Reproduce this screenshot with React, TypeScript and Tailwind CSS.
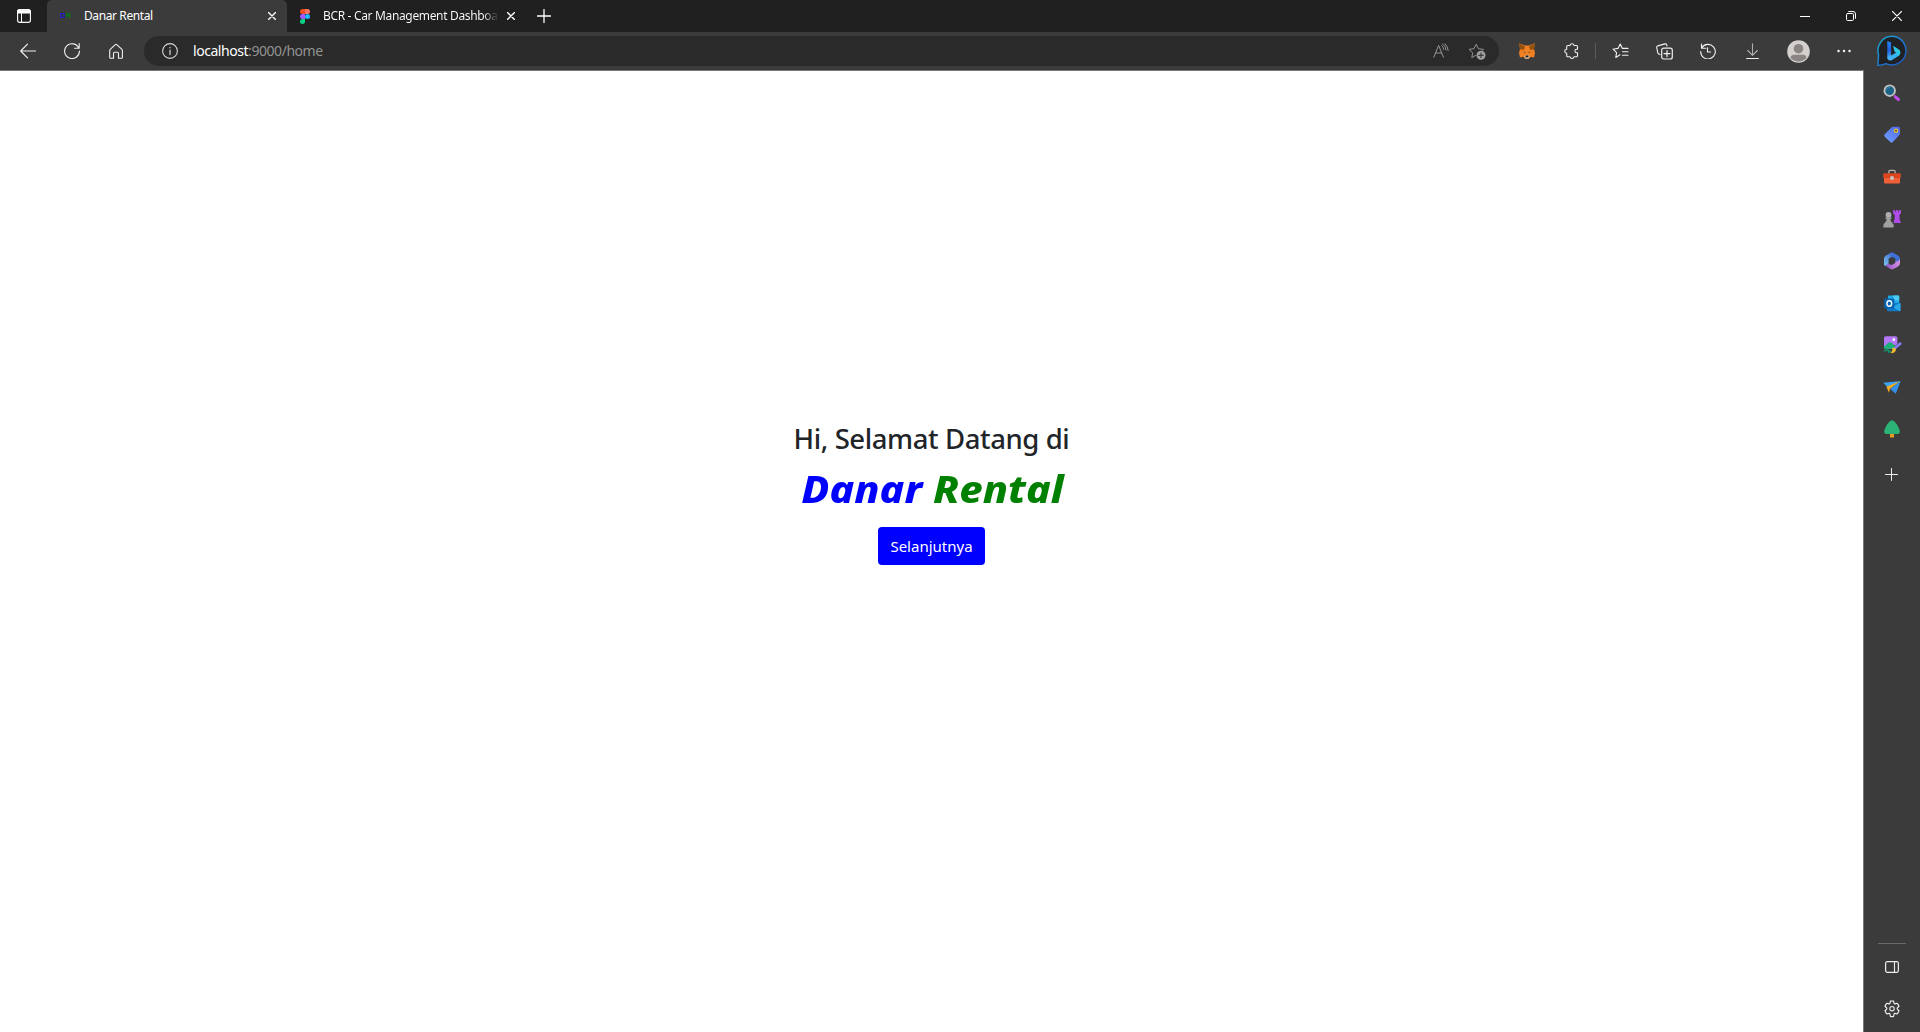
import type { ReactNode } from 'react';

type IconProps = { w?: number; h?: number; children: ReactNode };

function Icon({ w = 16, h = 16, children }: IconProps) {
  return (
    <svg
      width={w}
      height={h}
      viewBox={`0 0 ${w} ${h}`}
      fill="none"
      stroke="currentColor"
      strokeWidth="1"
      strokeLinecap="round"
      strokeLinejoin="round"
      className="block shrink-0"
    >
      {children}
    </svg>
  );
}

function CloseIcon() {
  return (
    <Icon w={8} h={8}>
      <path d="M.5 .5L7.5 7.5M7.5 .5L.5 7.5" strokeWidth="1.4" />
    </Icon>
  );
}

function TitleBar() {
  return (
    <div className="flex h-8 shrink-0 bg-[#202020] text-[12px] text-white">
      <div className="flex w-[47px] items-center justify-center pl-[1px]">
        <Icon w={14} h={14}>
          <rect x=".6" y=".6" width="12.8" height="12.8" rx="2.2" strokeWidth="1.1" />
          <path d="M1 1.2H13V4H1Z" fill="currentColor" />
          <path d="M4.5 4V13.4" />
        </Icon>
      </div>
      <div className="flex w-60 items-center rounded-t-[5px] bg-[#3b3b3b] pr-[11px] pl-[13px]">
        <span className="flex w-6 font-['Liberation_Sans',sans-serif] text-[8px] leading-none font-bold tracking-[-0.6px]">
          <span className="text-[#1717d8]">D</span>
          <span className="text-[#087b12]">R</span>
        </span>
        <span className="flex-1 whitespace-nowrap tracking-[-0.4px]">Danar Rental</span>
        <CloseIcon />
      </div>
      <div className="flex w-[239px] shrink-0 items-center pl-[13px]">
        <svg width="10" height="15" viewBox="0 0 10 15" className="mr-[13px] block shrink-0">
          <path d="M5 0H2.5A2.5 2.5 0 0 0 2.5 5H5Z" fill="#f24e1e" />
          <path d="M5 0H7.5A2.5 2.5 0 0 1 7.5 5H5Z" fill="#ff7262" />
          <path d="M5 5H2.5A2.5 2.5 0 0 0 2.5 10H5Z" fill="#a259ff" />
          <circle cx="7.5" cy="7.5" r="2.5" fill="#1abcfe" />
          <path d="M5 10H2.5A2.5 2.5 0 1 0 5 12.5Z" fill="#0acf83" />
        </svg>
        <span className="w-[174px] bg-linear-to-r from-white from-92% to-[#333] bg-clip-text whitespace-nowrap text-transparent tracking-[-0.34px]">
          BCR - Car Management Dashboa
        </span>
        <span className="ml-[10px]">
          <CloseIcon />
        </span>
        <span className="ml-[11px] h-5 w-px bg-[#696969]" />
      </div>
      <div className="flex w-9 items-center justify-center">
        <Icon w={14} h={14}>
          <path d="M7 .5V13.5M.5 7H13.5" strokeWidth="1.3" />
        </Icon>
      </div>
      <div className="ml-auto flex">
        <div className="flex w-[46px] items-center justify-center">
          <span className="h-px w-[10px] bg-white" />
        </div>
        <div className="flex w-[46px] items-center justify-center">
          <Icon w={10} h={10}>
            <rect x=".5" y="2.5" width="7" height="7" rx="1.2" />
            <path d="M2.7 .5H7A2.5 2.5 0 0 1 9.5 3V7.3" />
          </Icon>
        </div>
        <div className="flex w-[46px] items-center justify-center">
          <Icon w={10} h={10}>
            <path d="M.4 .4L9.6 9.6M9.6 .4L.4 9.6" strokeWidth="1.2" />
          </Icon>
        </div>
      </div>
    </div>
  );
}

function Tool({ children }: { children: ReactNode }) {
  return <div className="flex w-11 shrink-0 items-center justify-center">{children}</div>;
}

function MetaMask() {
  return (
    <svg width="16" height="16" viewBox="0 0 16 16" className="block">
      <path d="M.3 .3L6 2.6H10L15.7 .3L15 6L16 10L15 14.6L11.8 13.7L9.8 15.8H6.2L4.2 13.7L1 14.6L0 10L1 6Z" fill="#f08022" />
      <path d="M.3 .3L6 3.6L5 6.8L1 6.4ZM15.7 .3L10 3.6L11 6.8L15 6.4Z" fill="#94500f" />
      <path d="M3.9 8.8L6.3 9L6.6 10ZM12.1 8.8L9.7 9L9.4 10Z" fill="#35404e" />
      <path d="M5.2 13.2L6.6 12.2H9.4L10.8 13.2L9.6 15.8H6.4Z" fill="#c9b5a4" />
      <path d="M6.8 12.6H9.2L9.5 14.2H6.5Z" fill="#1b1b1b" />
    </svg>
  );
}

function Bing() {
  return (
    <svg width="32" height="32" viewBox="0 0 32 32" className="block">
      <defs>
        <linearGradient id="ring" x1="0" y1="0" x2="1" y2="1">
          <stop offset="0" stopColor="#19b6dd" />
          <stop offset=".45" stopColor="#1d82d8" />
          <stop offset="1" stopColor="#1852c4" />
        </linearGradient>
        <linearGradient id="stem" x1="0" y1="0" x2="0" y2="1">
          <stop offset="0" stopColor="#2487f5" />
          <stop offset=".55" stopColor="#245ddd" />
          <stop offset="1" stopColor="#43bdf7" />
        </linearGradient>
        <linearGradient id="bowl" x1="1" y1="0" x2="0" y2="1">
          <stop offset="0" stopColor="#2be0d0" />
          <stop offset=".5" stopColor="#32b4ef" />
          <stop offset="1" stopColor="#4daefc" />
        </linearGradient>
      </defs>
      <path d="M16.5 1.3A14.3 14.3 0 1 1 10 28.7C7.5 30 4.5 30.4 1.9 30.4L2.6 20A14.3 14.3 0 0 1 16.5 1.3Z" fill="#202124" stroke="url(#ring)" strokeWidth="1.4" />
      <path d="M11.3 6L15.1 7.4V20.8L11.3 23.4Z" fill="url(#stem)" />
      <path d="M17.1 10.8L22.5 14.2C25.1 16 24.9 19.5 22.5 21L15.7 25.2C13.5 26.2 11.3 25 11.3 22.6L20 17.8L18.5 16.6Z" fill="url(#bowl)" />
    </svg>
  );
}

function Toolbar() {
  return (
    <div className="flex h-[38px] shrink-0 items-center bg-[#3b3b3b] pl-[6px] text-[#f0f0f0]">
      <Tool>
        <Icon>
          <path d="M15.8 8H.7M7.5 1.2L.7 8L7.5 14.8" strokeWidth="1.15" />
        </Icon>
      </Tool>
      <Tool>
        <Icon>
          <path d="M14.8 5.2A7.4 7.4 0 1 0 15.4 8M15.2 .6V5.2H10.6" strokeWidth="1.1" />
        </Icon>
      </Tool>
      <Tool>
        <Icon w={14} h={16}>
          <path d="M1 7.2Q1 6.7 1.5 6.2L6.3 1.6Q7 1 7.7 1.6L12.7 6.2Q13.4 6.9 13.4 7.6V14.5Q13.4 15.3 12.5 15.3H9.5V10.5Q9.5 9.3 8.5 9.3H5.5Q4.5 9.3 4.5 10.5V15.3H1.6Q.7 15.3 .7 14.5V7.6Q.7 6.9 1.5 6.2" strokeWidth="1.1" />
        </Icon>
      </Tool>
      <div className="ml-[6px] flex h-[30px] w-[1355px] shrink-0 items-center rounded-full bg-[#2a2a2a] pl-[18px]">
        <Icon>
          <circle cx="8" cy="8" r="7.4" stroke="#d8d8d8" strokeWidth="1.1" />
          <path d="M8 7.2V11.5M8 4.5V4.8" stroke="#b8b8b8" strokeWidth="1.5" />
        </Icon>
        <span className="ml-[15px] flex-1 text-[14px] leading-5 tracking-[-0.45px] text-[#929292]">
          <span className="text-white">localhost</span>:9000/home
        </span>
        <div className="flex w-9 justify-center text-[#949494]">
          <Icon>
            <path d="M.8 14.2L5.6 2.3L10.4 14.2M2.5 10H8.7M8.8 2.8A5 5 0 0 1 10.7 6.4M9.6 .9A8 8 0 0 1 13 7M12 .8A10 10 0 0 1 15.2 7.5" />
          </Icon>
        </div>
        <div className="mr-[4px] flex w-9 justify-center text-[#949494]">
          <Icon w={18} h={17}>
            <path d="M7.6 12.4L3.8 14.7L4.7 9.8L1 6.4L6 5.7L8.2 1.2L10.4 5.7L15.5 6.4L14.8 7.2" />
            <circle cx="13" cy="12.3" r="4.5" fill="#a0a0a0" stroke="none" />
            <path d="M13 10V14.6M10.7 12.3H15.3" stroke="#2a2a2a" />
          </Icon>
        </div>
      </div>
      <div className="ml-[6px] flex items-center">
        <Tool>
          <MetaMask />
        </Tool>
        <Tool>
          <Icon w={15} h={16}>
            <path d="M2.7 4.5V3.5Q2.7 2.5 3.7 2.5H6Q6.3 .7 8 .7T10 2.5H12.5Q13.5 2.5 13.5 3.5V6.2H12.6Q10.9 6.2 10.9 8T12.6 9.8H13.5V12.8Q13.5 13.8 12.5 13.8H10Q9.6 15.4 8 15.4T6 13.8H3.7Q2.7 13.8 2.7 12.8V10.2Q.7 10 .7 8.2T2.7 6.2Z" strokeWidth="1.1" />
          </Icon>
        </Tool>
        <span className="mx-[2px] h-4 w-px bg-[#5b5b5b]" />
        <Tool>
          <Icon w={17} h={16}>
            <path d="M8 11.8L3.8 14.5L4.6 9.7L1 6.2L6 5.4L8.2 1L10.4 5.4H16M10.5 8.8H16M10.5 12.2H16" strokeWidth="1.1" />
          </Icon>
        </Tool>
        <Tool>
          <Icon w={17} h={17}>
            <path d="M4 11.6L2.8 11Q2 10.6 1.8 9.8L.7 4.6Q.5 3.2 1.8 2.9L8.8 .9Q10.2 .6 10.7 1.9L11 3" strokeWidth="1.1" />
            <rect x="5.7" y="5.2" width="10.6" height="10.8" rx="2" strokeWidth="1.2" />
            <path d="M11 7.6V13.6M8 10.6H14" strokeWidth="1.2" />
          </Icon>
        </Tool>
        <Tool>
          <Icon>
            <path d="M1.5 1V5.2H5.8M1.7 5A7.3 7.3 0 1 1 .7 8.5M7.5 4.8V9H10.6" strokeWidth="1.1" />
          </Icon>
        </Tool>
        <Tool>
          <Icon w={13} h={16}>
            <path d="M6.5 .7V12M1.7 7.5L6.5 12.3L11.3 7.5" stroke="#b0b0b0" strokeWidth="1.1" />
            <path d="M.6 15.5H12.4" />
          </Icon>
        </Tool>
        <div className="flex w-12 items-center justify-center">
          <svg width="23" height="23" viewBox="0 0 23 23" className="block">
            <circle cx="11.5" cy="11.5" r="11.3" fill="#d3d0ce" />
            <circle cx="11.5" cy="8.7" r="4.8" fill="#8a8583" />
            <path d="M3.5 18Q4 14.8 7 14.8H16Q19 14.8 19.5 18A11 11 0 0 1 3.5 18Z" fill="#8a8583" />
          </svg>
        </div>
        <Tool>
          <Icon w={14} h={4}>
            <path d="M1.5 2H1.6M7 2H7.1M12.5 2H12.6" strokeWidth="2.4" />
          </Icon>
        </Tool>
        <div className="flex w-[52px] justify-center">
          <Bing />
        </div>
      </div>
    </div>
  );
}

function SearchGlyph() {
  return (
    <svg width="18" height="18" viewBox="0 0 18 18">
      <path d="M12.2 12.7L15.4 15.5" stroke="#c04cf0" strokeWidth="3" strokeLinecap="round" />
      <circle cx="6.7" cy="6.7" r="5.3" fill="#1b6389" stroke="#c2c0bf" strokeWidth="1.9" />
      <path d="M3.3 6Q4 3.4 7 3.2" stroke="#3e87a8" strokeWidth="1" fill="none" />
    </svg>
  );
}

function TagGlyph() {
  return (
    <svg width="18" height="18" viewBox="0 0 18 18">
      <defs>
        <linearGradient id="tag" x1="1" y1="0" x2="0" y2="1">
          <stop stopColor="#5265e8" />
          <stop offset="1" stopColor="#6ea4ff" />
        </linearGradient>
      </defs>
      <path d="M9 1.1Q9.6 .8 10.4 .8H15.4Q17 .8 17 2.4V7.4Q17 8.4 16.2 9.3L9.8 16.1Q8.6 17.3 7.3 16.1L1.8 10.8Q.5 9.5 1.7 8.3Z" fill="url(#tag)" />
      <circle cx="13" cy="4.8" r="1.6" fill="#414141" stroke="#e9c72c" strokeWidth="1.3" />
    </svg>
  );
}

function ToolboxGlyph() {
  return (
    <svg width="18" height="16" viewBox="0 0 18 16">
      <path d="M5.8 4.5V3Q5.8 1.3 7.3 1.3H10.7Q12.2 1.3 12.2 3V4.5" fill="none" stroke="#b9b3b0" strokeWidth="1.3" />
      <rect x=".2" y="4.3" width="17.6" height="5" rx="1" fill="#d8451f" />
      <path d="M1 9H17V13.5Q17 14.6 16 14.6H2Q1 14.6 1 13.5Z" fill="#f06038" />
      <circle cx="9" cy="9" r="2" fill="#c9c4c2" />
    </svg>
  );
}

function ChessGlyph() {
  return (
    <svg width="18" height="18" viewBox="0 0 18 18">
      <path d="M10.2 0H12V1.4H13.1V0H15V1.4H16.1V0H18V3.4L16.4 4.9L16.7 9.7L18 13H10.4L11.5 9.7L11.8 4.9L10.2 3.4Z" fill="#b04ce8" />
      <circle cx="5.5" cy="5" r="2.9" fill="#b0b0b0" />
      <path d="M2.5 7.5H8.5V8.9H7.3Q7.4 11.6 9.3 13Q10.6 14 10.6 15V17.5H.4V15Q.4 14 1.7 13Q3.6 11.6 3.7 8.9H2.5Z" fill="#a0a0a0" />
    </svg>
  );
}

function OfficeGlyph() {
  return (
    <svg width="18" height="18" viewBox="0 0 18 18">
      <defs>
        <linearGradient id="m1" x1="1" y1="0" x2="0" y2="1">
          <stop stopColor="#355fd0" />
          <stop offset="1" stopColor="#7bc7ed" />
        </linearGradient>
        <linearGradient id="m2" x1="0" y1="0" x2="1" y2="0">
          <stop stopColor="#8a52c8" />
          <stop offset="1" stopColor="#d993e3" />
        </linearGradient>
      </defs>
      <path d="M8.2 .4L3 3.4Q1 4.7 1 7V12.2Q1 14 2.8 14L5.6 12.5V6.8L11.2 3.2Z" fill="url(#m1)" />
      <path d="M7.7 .6Q9.3 .1 10.4 .8L15.3 3.7Q17 4.7 17 7V9.5Q16 11.4 13.8 10.2L12.3 9V6.6L8.4 4.4Q7 3.4 7.7 .6Z" fill="#3c6fd7" />
      <path d="M17 7V11Q17 13.3 15 14.4L10.4 17Q9 17.8 7.5 17L2.8 14Q2.5 12.8 4 12.4L6 12L8.8 12.9L12.4 10.8V9Q15.5 10.5 17 7Z" fill="url(#m2)" />
    </svg>
  );
}

function OutlookGlyph() {
  return (
    <svg width="17" height="17" viewBox="0 0 17 17">
      <path d="M4 1.3Q4 .5 5 .5H14.3Q15.2 .5 15.2 1.5V8H4Z" fill="#21a9e8" />
      <path d="M9.5 .5H14.3Q15.2 .5 15.2 1.5V5.5H9.5Z" fill="#4ccbf4" />
      <path d="M3 8H16.5V15Q16.5 16.3 15.2 16.3H4.3Q3 16.3 3 15Z" fill="#1179c8" />
      <path d="M16.5 8V15Q16.5 16 15.7 16.3L8 11.8Z" fill="#2ba8e7" />
      <rect x=".3" y="3.5" width="10" height="10" rx="1" fill="#0563b2" />
      <ellipse cx="5.3" cy="8.5" rx="2.4" ry="2.7" fill="none" stroke="#fff" strokeWidth="1.4" />
    </svg>
  );
}

function PaintGlyph() {
  return (
    <svg width="19" height="18" viewBox="0 0 19 18">
      <rect x="1" y=".3" width="13.4" height="12.5" rx="1.8" fill="#b276f6" />
      <circle cx="10.8" cy="3.7" r="1.4" fill="#fff" />
      <path d="M1 10.5L5.4 6.7Q7 5.6 8.7 6.8L12.8 10.2V12.8H1Z" fill="#1bb174" />
      <path d="M1 15.4Q4 12.8 6 14.7Q4 16.5 8.5 16" fill="none" stroke="#119568" strokeWidth="1.5" />
      <path d="M12.3 11.7L17.7 7.3" stroke="#3b3b3b" strokeWidth="3.4" />
      <path d="M12.3 11.7L17.3 7.6" stroke="#857ef5" strokeWidth="2.6" strokeLinecap="round" />
      <path d="M9.5 12Q11.8 11 13 13.2Q12.8 17 7.8 17.3Q9.4 15.5 9.5 12Z" fill="#f1b827" />
    </svg>
  );
}

function PlaneGlyph() {
  return (
    <svg width="18" height="15" viewBox="0 0 18 15">
      <path d="M.3 2.7L17.7 1L5 7.8Z" fill="#3da5f4" />
      <path d="M3.4 6.8L17.7 1L7 8.8L6 12.8Z" fill="#f3ad24" />
      <path d="M17.7 1L12.8 13.7L7.2 9Z" fill="#3391ec" />
    </svg>
  );
}

function TreeGlyph() {
  return (
    <svg width="18" height="18" viewBox="0 0 18 18">
      <rect x="7" y="13" width="4" height="4.6" rx=".7" fill="#e69a22" />
      <path d="M9 .3Q10.3 .3 12.2 2.3Q14.8 5 16.4 9.5Q18 14 14 14H4Q0 14 1.6 9.5Q3.2 5 5.8 2.3Q7.7 .3 9 .3Z" fill="#2bb277" />
    </svg>
  );
}

function SideItem({ children }: { children: ReactNode }) {
  return <div className="flex h-[42px] w-full shrink-0 items-center justify-center">{children}</div>;
}

function Sidebar() {
  return (
    <aside className="flex w-[56px] flex-col items-center bg-[#3b3b3b] pt-[2px] text-[#eeeeee]">
      <SideItem><SearchGlyph /></SideItem>
      <SideItem><TagGlyph /></SideItem>
      <SideItem><ToolboxGlyph /></SideItem>
      <SideItem><ChessGlyph /></SideItem>
      <SideItem><OfficeGlyph /></SideItem>
      <SideItem><OutlookGlyph /></SideItem>
      <SideItem><PaintGlyph /></SideItem>
      <SideItem><PlaneGlyph /></SideItem>
      <SideItem><TreeGlyph /></SideItem>
      <div className="flex h-12 items-center justify-center pr-px">
        <Icon w={13} h={13}>
          <path d="M6.5 .5V12.5M.5 6.5H12.5" />
        </Icon>
      </div>
      <span className="mt-auto h-px w-7 bg-[#686868]" />
      <div className="flex h-[46px] items-center justify-center">
        <Icon w={14} h={12}>
          <rect x=".6" y=".6" width="12.8" height="10.8" rx="1.8" strokeWidth="1.2" />
          <path d="M9.5 .6V11.4" strokeWidth="1.1" />
        </Icon>
      </div>
      <div className="mb-1 flex h-[38px] items-center justify-center">
        <Icon w={16} h={18}>
          <path d="M6.4 1.2Q8 .8 9.6 1.2L10.1 3.3Q10.3 4 11 3.9L13 3.3Q14.4 4.5 15 6.3L13.4 7.8Q12.8 8.5 13.4 9.2L15 10.7Q14.4 12.7 13 14L11 13.3Q10.3 13.2 10.1 14L9.6 16.4Q8 16.8 6.4 16.4L5.9 14Q5.7 13.2 5 13.3L3 14Q1.6 12.7 1 10.7L2.6 9.2Q3.2 8.5 2.6 7.8L1 6.3Q1.6 4.5 3 3.3L5 3.9Q5.7 4 5.9 3.3Z" strokeWidth="1.2" />
          <circle cx="8" cy="8.7" r="2.2" strokeWidth="1.1" />
        </Icon>
      </div>
    </aside>
  );
}

function Welcome() {
  return (
    <main className="flex flex-1 flex-col items-center justify-center border-t border-r border-[#777] bg-white pb-[117px]">
      <h2 className="mb-2 text-[27.5px] leading-[34px] font-medium whitespace-nowrap tracking-[-0.4px] text-[#212529]">
        Hi, Selamat Datang di
      </h2>
      <h1 className="mb-[15px] scale-x-[1.09] pl-[2px] text-[38px] leading-[48px] font-extrabold whitespace-nowrap text-[#0000ff] italic">
        Danar <span className="text-[#008000]">Rental</span>
      </h1>
      <button className="h-[38px] w-[107px] rounded-[4px] bg-[#0000ff] text-[15px] leading-6 whitespace-nowrap text-white">
        Selanjutnya
      </button>
    </main>
  );
}

export default function App() {
  return (
    <div className="flex h-[1032px] w-[1920px] flex-col overflow-hidden bg-[#3b3b3b] font-['Noto_Sans','Open_Sans',sans-serif]">
      <TitleBar />
      <Toolbar />
      <div className="flex min-h-0 flex-1">
        <Welcome />
        <Sidebar />
      </div>
    </div>
  );
}
